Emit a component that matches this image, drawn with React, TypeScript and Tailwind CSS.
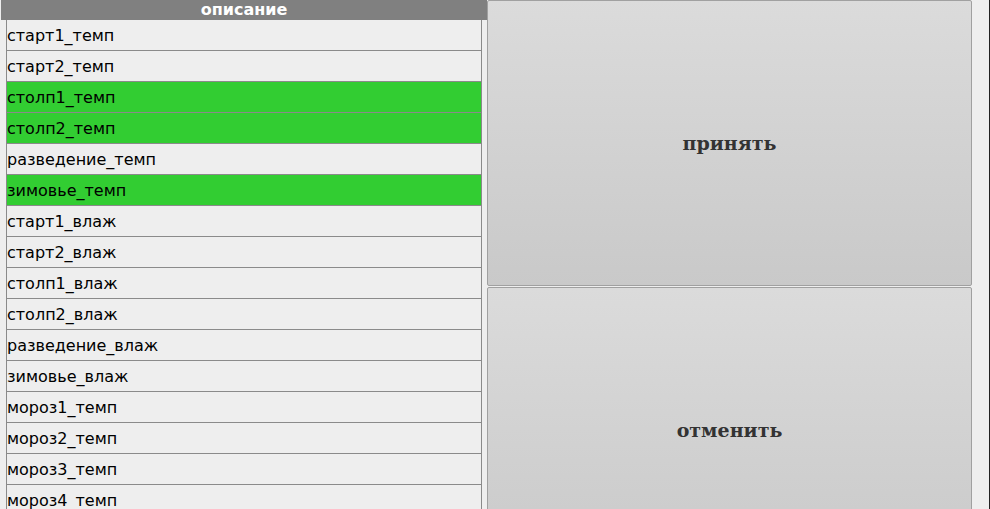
import React from 'react';

const rows = [
  { name: 'старт1_темп', on: false },
  { name: 'старт2_темп', on: false },
  { name: 'столп1_темп', on: true },
  { name: 'столп2_темп', on: true },
  { name: 'разведение_темп', on: false },
  { name: 'зимовье_темп', on: true },
  { name: 'старт1_влаж', on: false },
  { name: 'старт2_влаж', on: false },
  { name: 'столп1_влаж', on: false },
  { name: 'столп2_влаж', on: false },
  { name: 'разведение_влаж', on: false },
  { name: 'зимовье_влаж', on: false },
  { name: 'мороз1_темп', on: false },
  { name: 'мороз2_темп', on: false },
  { name: 'мороз3_темп', on: false },
  { name: 'мороз4_темп', on: false },
];

export default function App() {
  return (
    <div
      className="flex h-[509px] w-[990px] overflow-hidden bg-[#eeeeee]"
      style={{ fontFamily: "'DejaVu Sans', sans-serif" }}
    >
      <div className="flex w-[487px] shrink-0 flex-col pl-[1px]">
        <div className="flex h-[20px] shrink-0 items-center justify-center bg-[#808080] text-[16px] font-bold leading-none text-white">
          описание
        </div>
        <div className="ml-[5px] w-[476px] border-x border-[#8a8a8a]">
          {rows.map((r) => (
            <div
              key={r.name}
              className={`flex h-[31px] items-center border-b border-[#8a8a8a] pt-[1px] text-[16px] leading-none text-black ${
                r.on ? 'bg-[#32cd32]' : 'bg-[#eeeeee]'
              }`}
            >
              {r.name}
            </div>
          ))}
        </div>
      </div>

      <div
        className="flex w-[485px] shrink-0 flex-col gap-[1px]"
        style={{ fontFamily: "'DejaVu Serif', serif" }}
      >
        {['принять', 'отменить'].map((t) => (
          <button
            key={t}
            className="flex h-[286px] shrink-0 items-center justify-center rounded-[2px] border border-[#a0a0a0] bg-gradient-to-b from-[#dbdbdb] to-[#c9c9c9] text-[19px] font-bold text-[#333333]"
          >
            {t}
          </button>
        ))}
      </div>

      <div className="flex-1" />
      <div className="w-[1px] shrink-0 bg-[#222222]" />
    </div>
  );
}
